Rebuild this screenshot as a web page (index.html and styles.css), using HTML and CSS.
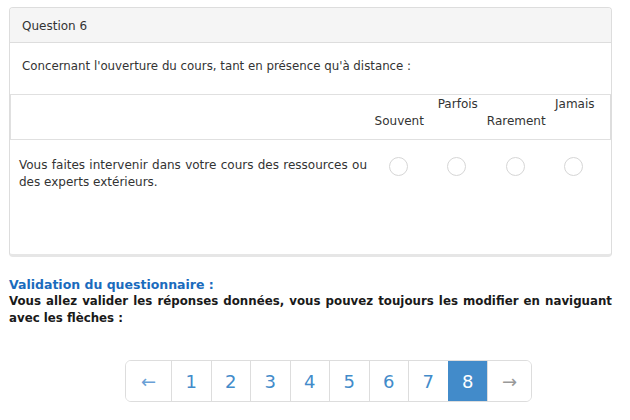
FILE: index.html
```html
<!DOCTYPE html>
<html lang="fr">
<head>
<meta charset="utf-8">
<title>Question 6</title>
<link rel="stylesheet" href="styles.css">
</head>
<body>
<div class="page">
  <section class="panel">
    <header class="panel-heading">Question 6</header>
    <p class="intro">Concernant l'ouverture du cours, tant en présence qu'à distance :</p>
    <div class="scale">
      <div class="scale-head">
        <div class="q-col"></div>
        <div class="opt low">Souvent</div>
        <div class="opt high">Parfois</div>
        <div class="opt low">Rarement</div>
        <div class="opt high">Jamais</div>
      </div>
      <div class="scale-row">
        <div class="q-col q-text">Vous faites intervenir dans votre cours des ressources ou des experts extérieurs.</div>
        <div class="opt"><span class="radio"></span></div>
        <div class="opt"><span class="radio"></span></div>
        <div class="opt"><span class="radio"></span></div>
        <div class="opt"><span class="radio"></span></div>
      </div>
    </div>
  </section>

  <h2 class="validation-title">Validation du questionnaire :</h2>
  <p class="validation-text">Vous allez valider les réponses données, vous pouvez toujours les modifier en naviguant avec les flèches :</p>

  <nav class="pagination">
    <span class="page-item arrow prev">&larr;</span>
    <span class="page-item">1</span>
    <span class="page-item">2</span>
    <span class="page-item">3</span>
    <span class="page-item">4</span>
    <span class="page-item">5</span>
    <span class="page-item">6</span>
    <span class="page-item">7</span>
    <span class="page-item active">8</span>
    <span class="page-item arrow next">&rarr;</span>
  </nav>
</div>
</body>
</html>
```
FILE: styles.css
```css
html, body {
  margin: 0;
  padding: 0;
  background: #ffffff;
}
body {
  font-family: "DejaVu Sans", Verdana, sans-serif;
  font-size: 12px;
  color: #333333;
}
.page {
  padding: 7px 18px 0 9px;
}
.panel {
  border: 1px solid #dddddd;
  border-bottom: 3px solid #e6e6e6;
  border-radius: 4px;
  height: 250px;
  box-sizing: border-box;
  display: flex;
  flex-direction: column;
}
.panel-heading {
  background: #f5f5f5;
  border-bottom: 1px solid #dddddd;
  border-radius: 3px 3px 0 0;
  height: 35px;
  box-sizing: border-box;
  padding: 1px 12px 0 12px;
  display: flex;
  align-items: center;
  color: #333333;
}
.intro {
  margin: 0;
  padding: 15px 12px 0 12px;
  height: 51px;
  box-sizing: border-box;
  line-height: 16px;
  font-size: 11.8px;
}
.scale {
  flex: 1;
  display: flex;
  flex-direction: column;
}
.scale-head,
.scale-row {
  display: grid;
  grid-template-columns: 350px repeat(4, 58.5px);
  padding: 0 9px;
}
.scale-head {
  border: 1px solid #e0e0e0;
  border-right-color: #dddddd;
  height: 46px;
  box-sizing: border-box;
  align-items: stretch;
}
.scale-head .opt {
  display: flex;
  flex-direction: column;
  align-items: center;
  line-height: 17px;
  white-space: nowrap;
}
.scale-head .opt.high {
  justify-content: flex-start;
  padding-top: 1px;
}
.scale-head .opt.low {
  justify-content: flex-start;
  padding-top: 18px;
}
.scale-row {
  padding-top: 17px;
  flex: 1;
}
.q-text {
  text-align: justify;
  line-height: 17px;
  padding-right: 2px;
}
.scale-row .opt {
  display: flex;
  justify-content: center;
  align-items: flex-start;
  padding-top: 0;
}
.radio {
  width: 19px;
  height: 19px;
  border: 1px solid #d6d6d6;
  border-radius: 50%;
  box-sizing: border-box;
  background: #ffffff;
}
.validation-title {
  margin: 19px 0 0 0;
  font-size: 12.5px;
  font-weight: bold;
  color: #1a6bbd;
  line-height: 17px;
}
.validation-text {
  margin: 0;
  font-weight: bold;
  font-size: 11.8px;
  color: #1a1a1a;
  text-align: justify;
  line-height: 17px;
}
.pagination {
  display: flex;
  margin: 33px 0 0 116px;
  width: fit-content;
  border: 1px solid #dddddd;
  border-radius: 6px;
  overflow: hidden;
}
.page-item {
  width: 39.5px;
  height: 40px;
  box-sizing: border-box;
  display: flex;
  align-items: center;
  justify-content: center;
  font-size: 18px;
  color: #428bca;
  border-left: 1px solid #dddddd;
  background: #ffffff;
}
.page-item.prev {
  border-left: none;
  width: 45px;
  color: #6a9fd6;
}
.page-item.next {
  width: 44px;
  color: #999999;
}
.page-item.active {
  background: #428bca;
  color: #ffffff;
  border-left-color: #428bca;
}
```
